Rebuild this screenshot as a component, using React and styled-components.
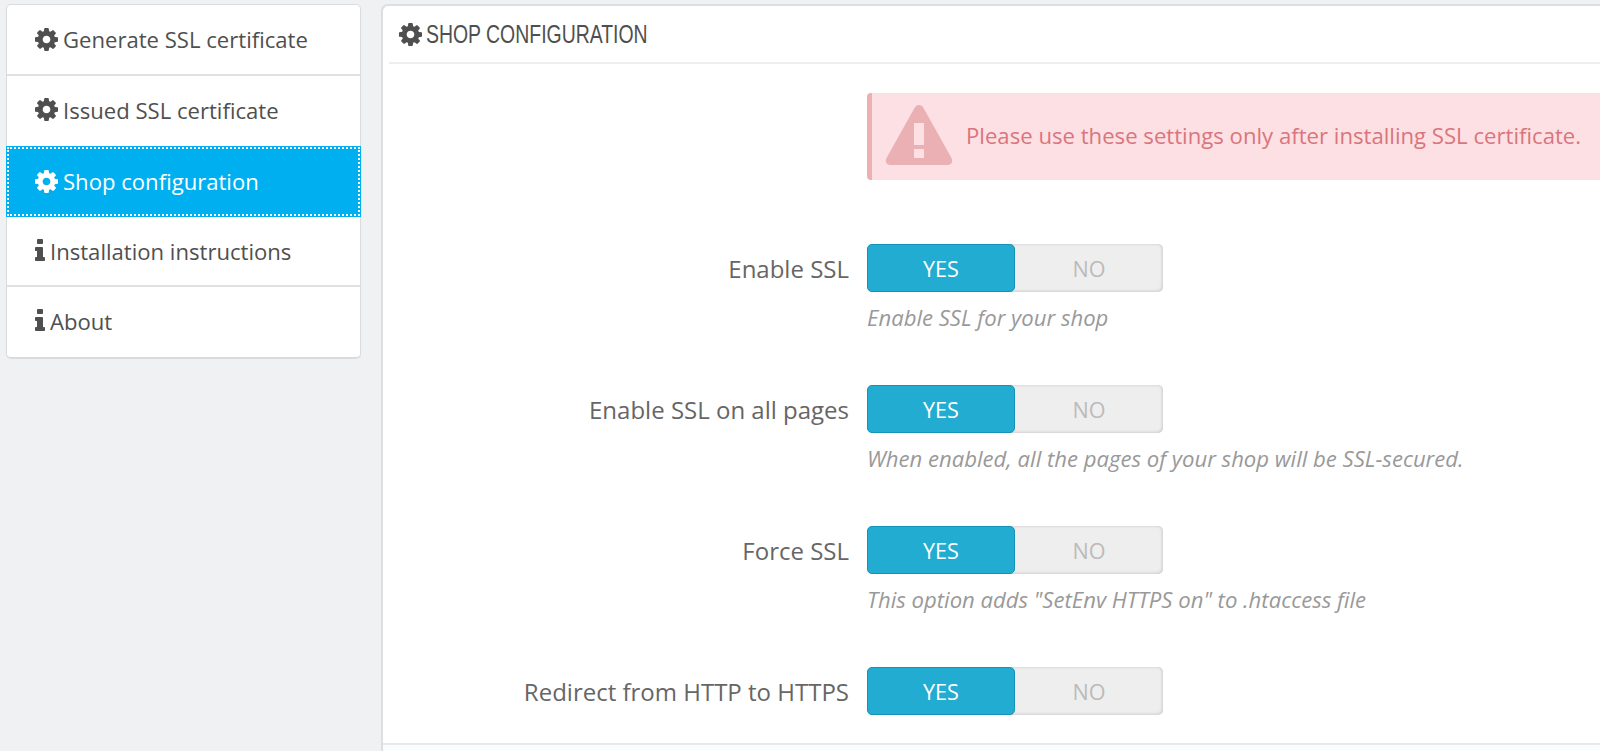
import React from 'react';
import styled, { createGlobalStyle } from 'styled-components';

const GlobalStyle = createGlobalStyle`
  html, body {
    margin: 0;
    height: 751px;
    overflow: hidden;
    background: #eff1f2;
    font-family: "Open Sans", "Liberation Sans", sans-serif;
  }
`;

const Page = styled.div`
  display: flex;
  align-items: flex-start;
  gap: 20px;
  width: 1700px;
  padding: 4px 0 0 6px;
`;

const Menu = styled.nav`
  width: 355px;
  height: 355px;
  flex: none;
  display: flex;
  flex-direction: column;
  box-sizing: border-box;
  background: #fff;
  border: 1px solid #d9dbdd;
  border-bottom-width: 2px;
  border-radius: 5px;
`;

const MenuItem = styled.a`
  display: flex;
  align-items: center;
  gap: 5px;
  height: 70.5px;
  flex: none;
  margin: ${({ $active }) => ($active ? '0 -1px' : '0')};
  padding: 0 0 0 ${({ $active }) => ($active ? '29px' : '28px')};
  box-sizing: border-box;
  font-size: 22.1px;
  color: ${({ $active }) => ($active ? '#fff' : '#4f4f4f')};
  background: ${({ $active }) => ($active ? '#00aff0' : 'transparent')};
  border-bottom: 2px solid ${({ $plain }) => ($plain ? 'transparent' : '#dfe1e3')};
  ${({ $active }) => $active && 'outline: 2px dotted #fff; outline-offset: -3px; border-bottom: none;'}
`;

const IconSvg = styled.svg`
  width: 23px;
  height: 23px;
  flex: none;
  fill: currentColor;
`;

const InfoSvg = styled.svg`
  width: 10px;
  height: 22px;
  flex: none;
  margin: -2px 0 0 0;
  fill: currentColor;
`;

const Panel = styled.section`
  width: 1300px;
  height: 800px;
  flex: none;
  box-sizing: border-box;
  background: #fff;
  border: 2px solid #dcdee0;
  border-right: none;
  border-bottom: none;
  border-radius: 7px 0 0 0;
  padding: 0 0 0 6px;
`;

const Title = styled.h3`
  display: flex;
  align-items: center;
  gap: 4px;
  height: 58px;
  margin: 0;
  box-sizing: border-box;
  border-bottom: 2px solid #eeeeee;
  font-weight: 400;
  color: #4f4f4f;
  padding: 0 0 0 10px;
`;

/* no condensed family is installed, so the heading face is squeezed */
const TitleText = styled.span`
  display: inline-block;
  font-family: "Liberation Sans", sans-serif;
  font-size: 25px;
  text-transform: uppercase;
  white-space: nowrap;
  transform: scaleX(0.777);
  transform-origin: left center;
`;

const Alert = styled.div`
  display: flex;
  align-items: center;
  gap: 13px;
  width: 1000px;
  height: 87px;
  margin: 29px 0 64px 478px;
  box-sizing: border-box;
  background: #fde0e3;
  border-left: 5px solid #ebb0b4;
  border-radius: 4px 0 0 4px;
  padding: 0 0 4px 13px;
  font-size: 22.15px;
  color: #d9757d;
`;

const WarnSvg = styled.svg`
  width: 68px;
  height: 62px;
  flex: none;
  fill: #ebb0b4;
`;

const Row = styled.div`
  display: grid;
  grid-template-columns: 460px 296px;
  column-gap: 18px;
  align-items: center;
  height: 48px;
  margin-bottom: 93px;
`;

const Label = styled.label`
  font-size: 24px;
  color: #666666;
  text-align: right;
  white-space: nowrap;
`;

const Field = styled.div`
  position: relative;
`;

const Switch = styled.div`
  display: flex;
  width: 296px;
  height: 48px;
  background: #eeeeee;
  border-radius: 5px;
  box-shadow: inset -1px -1px 3px #cfcfcf, inset 0 1px 2px #dddddd;
`;

const SwitchOn = styled.div`
  width: 148px;
  display: flex;
  align-items: center;
  justify-content: center;
  box-sizing: border-box;
  background: #22acd1;
  border: 1px solid #1592b8;
  border-radius: 5px;
  color: #fff;
  font-size: 21.6px;
`;

const SwitchOff = styled.div`
  flex: 1;
  display: flex;
  align-items: center;
  justify-content: center;
  color: #bbbbbb;
  font-size: 21.6px;
`;

const Help = styled.p`
  position: absolute;
  left: 0;
  top: 58px;
  margin: 0;
  white-space: nowrap;
  font-size: 22.1px;
  font-style: italic;
  color: #999999;
`;

const Footer = styled.div`
  border-top: 2px solid #e6e8ea;
  margin: -65px 0 0 -6px;
  height: 80px;
  background: #fbfcfd;
`;

const COG = 'M1152 896q0-106-75-181t-181-75-181 75-75 181 75 181 181 75 181-75 75-181zm512-109v222q0 12-8 23t-20 13l-185 28q-19 54-39 91 35 50 107 138 10 12 10 25t-9 23q-27 37-99 108t-94 71q-12 0-26-9l-138-108q-44 23-91 38-16 136-29 186-7 28-36 28h-222q-14 0-24.5-8.5t-11.5-21.5l-28-184q-49-16-90-37l-141 107q-10 9-25 9-14 0-25-11-126-114-165-168-7-10-7-23 0-12 8-23 15-21 51-66.5t54-70.5q-27-50-41-99l-183-27q-13-2-21-12.5t-8-23.5v-222q0-12 8-23t19-13l186-28q14-46 39-92-40-57-107-138-10-12-10-24 0-10 9-23 26-36 98.5-107.5t94.5-71.5q13 0 26 10l138 107q44-23 91-38 16-136 29-186 7-28 36-28h222q14 0 24.5 8.5t11.5 21.5l28 184q49 16 90 37l142-107q9-9 24-9 13 0 25 10 129 119 165 170 7 8 7 22 0 12-8 23-15 21-51 66.5t-54 70.5q26 50 41 98l183 28q13 2 21 12.5t8 23.5z';
const INFO = 'M1216 1344v128q0 26-19 45t-45 19h-512q-26 0-45-19t-19-45v-128q0-26 19-45t45-19h64v-384h-64q-26 0-45-19t-19-45v-128q0-26 19-45t45-19h384q26 0 45 19t19 45v576h64q26 0 45 19t19 45zm-128-1152v192q0 26-19 45t-45 19h-256q-26 0-45-19t-19-45v-192q0-26 19-45t45-19h256q26 0 45 19t19 45z';

const Cog = () => (
  <IconSvg viewBox="128 128 1536 1536"><path d={COG} /></IconSvg>
);

const Info = () => (
  <InfoSvg viewBox="576 128 640 1408" preserveAspectRatio="none"><path d={INFO} /></InfoSvg>
);

const menu = [
  { label: 'Generate SSL certificate', icon: 'cog' },
  { label: 'Issued SSL certificate', icon: 'cog', plain: true },
  { label: 'Shop configuration', icon: 'cog', active: true },
  { label: 'Installation instructions', icon: 'info' },
  { label: 'About', icon: 'info', plain: true },
];

const settings = [
  { label: 'Enable SSL', help: 'Enable SSL for your shop' },
  { label: 'Enable SSL on all pages', help: 'When enabled, all the pages of your shop will be SSL-secured.' },
  { label: 'Force SSL', help: 'This option adds "SetEnv HTTPS on" to .htaccess file' },
  { label: 'Redirect from HTTP to HTTPS' },
];

export default function App() {
  return (
    <Page>
      <GlobalStyle />
      <Menu>
        {menu.map((item) => (
          <MenuItem key={item.label} $active={item.active} $plain={item.plain}>
            {item.icon === 'cog' ? <Cog /> : <Info />}
            {item.label}
          </MenuItem>
        ))}
      </Menu>
      <Panel>
        <Title><Cog /><TitleText>Shop configuration</TitleText></Title>
        <Alert>
          <WarnSvg viewBox="0 0 68 62">
            <path
              fillRule="evenodd"
              d="M34 1c2 0 3.500 1 4.500 3L66.500 54c1.500 3 .5 7-4 7H5.500c-4.500 0-5.500-4-4-7L29.500 4c1-2 2.500-3 4.500-3zM29 19v22h10V19zM29 45v9h10v-9z"
            />
          </WarnSvg>
          Please use these settings only after installing SSL certificate.
        </Alert>
        {settings.map((s) => (
          <Row key={s.label}>
            <Label>{s.label}</Label>
            <Field>
              <Switch>
                <SwitchOn>YES</SwitchOn>
                <SwitchOff>NO</SwitchOff>
              </Switch>
              {s.help && <Help>{s.help}</Help>}
            </Field>
          </Row>
        ))}
        <Footer />
      </Panel>
    </Page>
  );
}
